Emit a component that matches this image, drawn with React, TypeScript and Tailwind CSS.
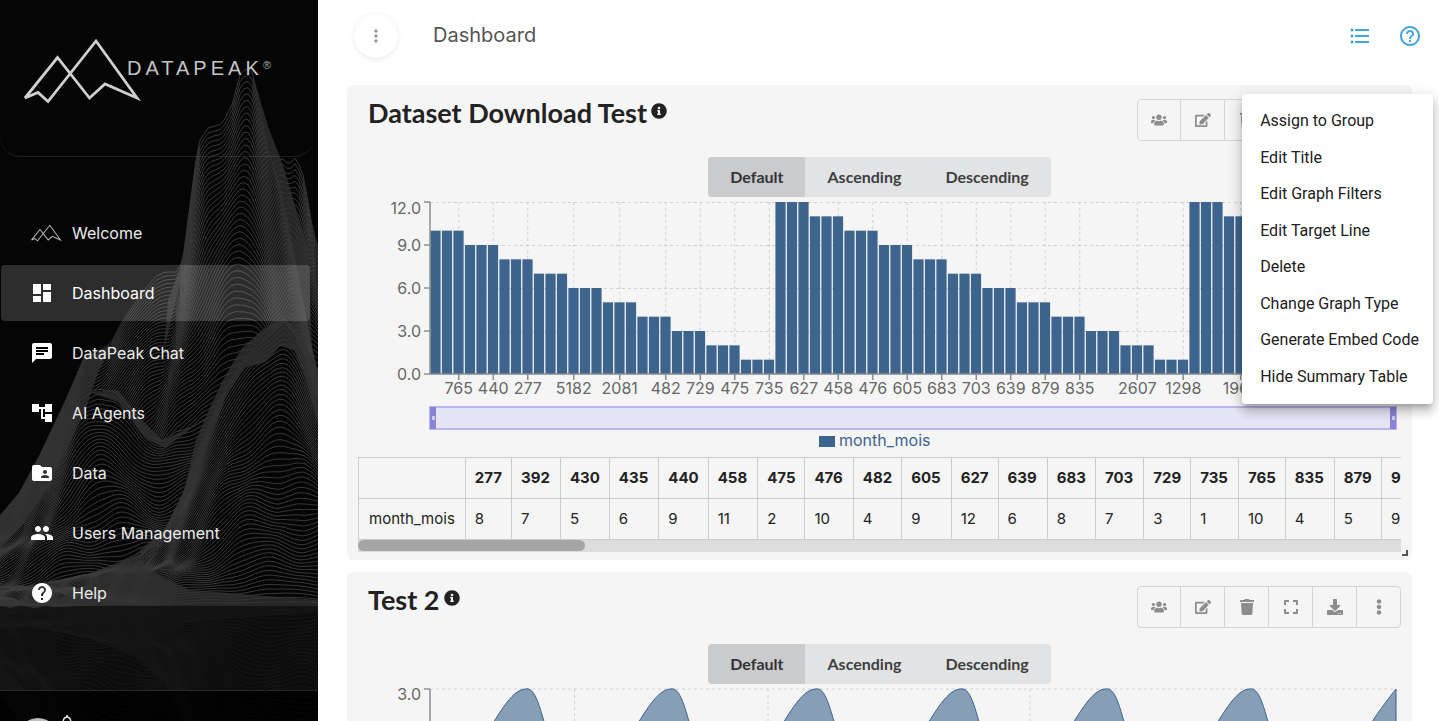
import type { ReactNode } from "react";
import type { IconType } from "react-icons";
import {
  FaDownload,
  FaEdit,
  FaEllipsisV,
  FaExpand,
  FaInfoCircle,
  FaTrash,
  FaUsers,
} from "react-icons/fa";
import {
  MdAccountTree,
  MdChat,
  MdDashboard,
  MdFolderShared,
  MdFormatListBulleted,
  MdHelp,
  MdHelpOutline,
  MdMoreVert,
  MdNotificationsNone,
  MdPeople,
} from "react-icons/md";

type Point = [number, number];

const PEAK_PATH =
  "M25 98 L57.5 57.5 L89.5 98 L105 84 L137 98 L96 41 L48 101.5 L38 92.5 Z";

const navItems: { label: string; icon?: IconType }[] = [
  { label: "Welcome" },
  { label: "Dashboard", icon: MdDashboard },
  { label: "DataPeak Chat", icon: MdChat },
  { label: "AI Agents", icon: MdAccountTree },
  { label: "Data", icon: MdFolderShared },
  { label: "Users Management", icon: MdPeople },
  { label: "Help", icon: MdHelp },
];

const toolbar: { label: string; icon: IconType }[] = [
  { label: "Assign to group", icon: FaUsers },
  { label: "Edit", icon: FaEdit },
  { label: "Delete", icon: FaTrash },
  { label: "Full screen", icon: FaExpand },
  { label: "Download", icon: FaDownload },
  { label: "More options", icon: FaEllipsisV },
];

const menuItems = [
  "Assign to Group",
  "Edit Title",
  "Edit Graph Filters",
  "Edit Target Line",
  "Delete",
  "Change Graph Type",
  "Generate Embed Code",
  "Hide Summary Table",
];

const summary: Point[] = [
  [277, 8],
  [392, 7],
  [430, 5],
  [435, 6],
  [440, 9],
  [458, 11],
  [475, 2],
  [476, 10],
  [482, 4],
  [605, 9],
  [627, 12],
  [639, 6],
  [683, 8],
  [703, 7],
  [729, 3],
  [735, 1],
  [765, 10],
  [835, 4],
  [879, 5],
  [914, 9],
];

// every value is shared by three neighbouring bars
const barGroups = [
  10, 9, 8, 7, 6, 5, 4, 3, 2, 1, 12, 11, 10, 9, 8, 7, 6, 5, 4, 3, 2, 1, 12, 11,
  10, 9, 8, 7,
];
const bars = barGroups.flatMap((value) => [value, value, value]);

// [bar index, label]
const xTicks: Point[] = [
  [2, 765],
  [5, 440],
  [8, 277],
  [12, 5182],
  [16, 2081],
  [20, 482],
  [23, 729],
  [26, 475],
  [29, 735],
  [32, 627],
  [35, 458],
  [38, 476],
  [41, 605],
  [44, 683],
  [47, 703],
  [50, 639],
  [53, 879],
  [56, 835],
  [61, 2607],
  [65, 1298],
  [70, 1962],
];

/* ---------- terrain behind the sidebar ---------- */

const GROUND = 606;

const secondPeak: Point[] = [
  [255, 240], [266, 175], [275, 162], [282, 158], [289, 165], [296, 157],
  [304, 178], [311, 220], [318, 252],
];
const mainPeak: Point[] = [
  [0, 516], [20, 492], [40, 455], [65, 402], [84, 358], [110, 345], [122, 322],
  [140, 296], [155, 277], [165, 272], [176, 272], [183, 262], [188, 220],
  [196, 160], [200, 140], [208, 128], [222, 124], [232, 105], [240, 75],
  [246, 68], [252, 72], [260, 110], [268, 150], [279, 185], [290, 235],
  [303, 300], [312, 350], [318, 375],
];
const lowRidge: Point[] = [
  [0, 547], [25, 522], [48, 485], [66, 435], [80, 400], [98, 389], [115, 392],
  [130, 408], [142, 428], [152, 438], [162, 442], [175, 432], [190, 428],
  [205, 420], [240, 470], [318, 480],
];
const frontRidge: Point[] = [
  [0, 592], [90, 574], [140, 555], [165, 530], [184, 492], [196, 458],
  [208, 428], [222, 395], [240, 366], [255, 348], [270, 336], [284, 322],
  [295, 335], [305, 358], [318, 402],
];

// dense areas where the contour lines run together
const bands = [
  "M0 516 L20 492 L40 455 L65 402 L84 358 L112 345 L98 372 L86 408 L66 450 L44 492 L22 526 L0 548 Z",
  "M132 557 L165 529 L184 490 L196 440 L208 412 L224 378 L242 348 L262 330 L284 317 L300 334 L318 370 L318 425 L306 378 L294 350 L280 346 L266 362 L244 368 L226 396 L210 440 L194 482 L172 524 L148 550 Z",
  "M252 72 L268 150 L290 235 L303 300 L312 350 L308 250 L284 168 L268 126 Z",
  "M181 266 L188 220 L200 140 L198 180 L190 240 L176 300 L164 350 L168 300 Z",
  "M88 392 L118 390 L140 418 L162 440 L196 425 L165 448 L145 438 L118 402 Z",
  "M60 598 L110 572 L140 560 L160 576 L190 590 L318 600 L318 606 L0 606 L0 600 Z",
];

function silhouette(points: Point[], x: number) {
  for (let i = 1; i < points.length; i++) {
    const [x0, y0] = points[i - 1];
    const [x1, y1] = points[i];
    if (x <= x1 && x1 > x0) {
      return y0 + ((y1 - y0) * Math.max(0, x - x0)) / (x1 - x0);
    }
  }
  return points[points.length - 1][1];
}

// t = 1 is the skyline, lower levels get softer towards the ground
function contour(points: Point[], t: number, seed: number) {
  let d = "";
  const from = points[0][0];
  const spread = (1 - t) * 22;
  for (let x = from; x <= 320; x += 4) {
    let sum = 0;
    for (let k = -3; k <= 3; k++) {
      sum += silhouette(points, x + k * spread);
    }
    const height = GROUND - sum / 7;
    const ripple =
      Math.sin(x / 14 + seed + t * 9) * 7 + Math.sin(x / 7 - t * 14) * 2;
    const y = GROUND - height * t + ripple * t * (1 - t) * 4;
    d += `${d ? "L" : "M"}${x} ${y.toFixed(1)}`;
  }
  return d;
}

function Ridge({
  points,
  lines,
  seed,
}: {
  points: Point[];
  lines: number;
  seed: number;
}) {
  const levels = Array.from({ length: lines }, (_, i) => 1 - i / lines);
  return (
    <g>
      <path
        d={`${contour(points, 1, seed)}L320 ${GROUND}L${points[0][0]} ${GROUND}Z`}
        fill="#050505"
        stroke="none"
      />
      {levels.map((t) => (
        <path key={t} d={contour(points, t, seed)} />
      ))}
    </g>
  );
}

function Mountains() {
  return (
    <g fill="none" stroke="#3d3d3d" strokeWidth="0.9">
      <Ridge points={secondPeak} lines={80} seed={1} />
      <Ridge points={mainPeak} lines={92} seed={0} />
      <Ridge points={lowRidge} lines={50} seed={4} />
      <Ridge points={frontRidge} lines={60} seed={3} />
      <g fill="#333" fillOpacity="0.75" stroke="none">
        {bands.map((d) => (
          <path key={d} d={d} />
        ))}
      </g>
    </g>
  );
}

function Terrain() {
  return (
    <svg
      viewBox="0 0 318 721"
      preserveAspectRatio="xMidYMid slice"
      className="absolute inset-0 size-full"
      aria-hidden="true"
    >
      <Mountains />
      <g transform="translate(0 1212) scale(1 -1)" opacity="0.3">
        <Mountains />
      </g>
      <rect x="0" y="606" width="318" height="84" fill="#1a1a1a" opacity="0.4" />
    </svg>
  );
}

/* ---------- sidebar ---------- */

function Sidebar() {
  return (
    <aside className="relative flex w-[318px] shrink-0 flex-col overflow-hidden bg-[#050505] font-['Inter',sans-serif]">
      <Terrain />
      <div className="relative mr-1 h-[157px] rounded-b-[20px] border-b border-white/10">
        <svg viewBox="0 0 314 156" className="h-[156px] w-[314px]">
          <path d={PEAK_PATH} fill="none" stroke="#cfcfcf" strokeWidth="2.8" />
          <text
            x="127"
            y="75"
            fill="#c4c4c4"
            className="font-['Liberation_Sans',sans-serif] text-[20px] tracking-[4px]"
          >
            DATAPEAK
          </text>
          <text
            x="263"
            y="69"
            fill="#a8a8a8"
            className="font-['Liberation_Sans',sans-serif] text-[11px]"
          >
            ®
          </text>
        </svg>
      </div>
      <nav className="relative mt-12 flex flex-1 flex-col gap-1">
        {navItems.map(({ label, icon: Icon }) => (
          <a
            key={label}
            href="#"
            className={
              label === "Dashboard"
                ? "mr-2 ml-px flex h-14 shrink-0 items-center rounded bg-white/16 pl-[29px] text-white"
                : "mr-2 ml-px flex h-14 shrink-0 items-center pl-[29px] text-[#ececec]"
            }
          >
            <span className="w-[42px]">
              {Icon ? (
                <Icon className="size-6 text-white" />
              ) : (
                <svg viewBox="20 36 122 70" className="h-[18px] w-8">
                  <path
                    d={PEAK_PATH}
                    fill="none"
                    stroke="#b5b5b5"
                    strokeWidth="4"
                  />
                </svg>
              )}
            </span>
            <span className="text-base">{label}</span>
          </a>
        ))}
      </nav>
      <div className="relative flex h-[31px] shrink-0 items-start overflow-hidden border-t border-white/15 bg-black/70 pt-[22px] pl-[18px]">
        <span className="mt-[5px] size-10 shrink-0 rounded-full bg-[#bdbdbd]" />
        <MdNotificationsNone className="size-[18px] shrink-0 text-[#d8d8d8]" />
      </div>
    </aside>
  );
}

/* ---------- charts, drawn in a 1043 wide box ---------- */

const LEFT = 72;
const RIGHT = 1038;
const STEP = 11.5;
const TOP = 5;
const BASE = 177;
const UNIT = (BASE - TOP) / 12;

function BarChart() {
  const center = (index: number) => LEFT + (index + 0.5) * STEP;
  return (
    <svg
      viewBox="0 0 1043 260"
      className="block w-full font-['Inter',sans-serif] text-[16px]"
      role="img"
      aria-label="month_mois bar chart"
    >
      <g stroke="#d0d0d0" strokeDasharray="3 3">
        {[12, 9, 6, 3].map((value) => (
          <line
            key={value}
            x1={LEFT}
            x2={RIGHT}
            y1={BASE - value * UNIT + 0.5}
            y2={BASE - value * UNIT + 0.5}
          />
        ))}
        {xTicks.map(([index]) => (
          <line
            key={index}
            x1={center(index)}
            x2={center(index)}
            y1={TOP}
            y2={BASE}
          />
        ))}
      </g>
      <g fill="#3d648d">
        {bars.map((value, i) => (
          <rect
            key={i}
            x={LEFT + i * STEP + 0.4}
            y={BASE - value * UNIT}
            width="10.2"
            height={value * UNIT}
          />
        ))}
      </g>
      <g stroke="#888" strokeWidth="1.4">
        <line x1={LEFT} x2={LEFT} y1={TOP} y2={BASE} />
        <line x1={LEFT} x2={RIGHT} y1={BASE} y2={BASE} />
        {[12, 9, 6, 3, 0].map((value) => (
          <line
            key={value}
            x1={LEFT - 6}
            x2={LEFT}
            y1={BASE - value * UNIT}
            y2={BASE - value * UNIT}
          />
        ))}
        {xTicks.map(([index]) => (
          <line
            key={index}
            x1={center(index)}
            x2={center(index)}
            y1={BASE}
            y2={BASE + 6}
          />
        ))}
      </g>
      <g fill="#666" textAnchor="end">
        <text x="63" y="17">12.0</text>
        <text x="63" y="54">9.0</text>
        <text x="63" y="97">6.0</text>
        <text x="63" y="140">3.0</text>
        <text x="63" y="183">0.0</text>
      </g>
      <g fill="#666" textAnchor="middle">
        {xTicks.map(([index, label]) => (
          <text key={index} x={center(index)} y="197">
            {label}
          </text>
        ))}
      </g>
      <rect
        x={LEFT}
        y="210"
        width={RIGHT - LEFT}
        height="22"
        fill="#e6e5f5"
        stroke="#b9b6ea"
        strokeWidth="2"
      />
      {[LEFT, RIGHT - 6].map((x) => (
        <g key={x}>
          <rect x={x} y="210" width="6" height="22" fill="#8884d8" />
          <rect x={x + 2} y="219" width="3" height="4" fill="#cfcdf0" />
        </g>
      ))}
      <rect x="461" y="239" width="16" height="11" fill="#3d648d" />
      <text x="481" y="249" fill="#3d648d">
        month_mois
      </text>
    </svg>
  );
}

function AreaChart() {
  const peaks = [168, 313, 458, 603, 748, 892];
  return (
    <svg
      viewBox="0 0 1043 200"
      className="block w-full font-['Inter',sans-serif] text-[16px]"
      role="img"
      aria-label="Test 2 area chart"
    >
      <g stroke="#d0d0d0" strokeDasharray="3 3">
        <line x1={LEFT} x2={RIGHT} y1="5" y2="5" />
        {[216.5, 410, 672, 1038].map((x) => (
          <line key={x} x1={x} x2={x} y1="5" y2="177" />
        ))}
      </g>
      <g fill="#3d648d" fillOpacity="0.6" stroke="#3d648d">
        {peaks.map((x) => (
          <path
            key={x}
            d={`M${x - 97} 177 L${x - 32} 37.5 C${x - 21} 20 ${x - 11} 5 ${x} 5 C${x + 8} 3 ${x + 13} 20 ${x + 18} 37.5 L${x + 48} 177`}
          />
        ))}
        <path d="M941 177 C985 80 1010 40 1038 5 V177" />
      </g>
      <g stroke="#888" strokeWidth="1.4">
        <line x1={LEFT} x2={LEFT} y1="5" y2="177" />
        <line x1={LEFT - 6} x2={LEFT} y1="5" y2="5" />
      </g>
      <text x="63" y="16" fill="#666" textAnchor="end">
        3.0
      </text>
    </svg>
  );
}

function SummaryTable() {
  return (
    <div className="overflow-hidden">
      <table className="w-max border-collapse font-['Inter',sans-serif] text-[15px] leading-6 text-[#222]">
        <thead>
          <tr className="h-[41px]">
            <td className="border border-[#ccc] px-2.5" />
            {summary.map(([key]) => (
              <th
                key={key}
                scope="col"
                className="border border-[#ccc] pr-2.5 pl-[9px] text-left font-bold even:pr-[9px]"
              >
                {key}
              </th>
            ))}
          </tr>
        </thead>
        <tbody>
          <tr className="h-[41px]">
            <th
              scope="row"
              className="border border-[#ccc] px-2.5 text-left font-normal"
            >
              month_mois
            </th>
            {summary.map(([key, value]) => (
              <td key={key} className="border border-[#ccc] px-[9px]">
                {value}
              </td>
            ))}
          </tr>
        </tbody>
      </table>
      <div className="h-3 bg-[#dcdcdc]">
        <div className="h-[11px] w-[227px] rounded-full bg-[#a5a5a5]" />
      </div>
    </div>
  );
}

/* ---------- cards ---------- */

function GraphCard({
  title,
  children,
}: {
  title: string;
  children: ReactNode;
}) {
  return (
    <section className="relative rounded-md bg-[#f5f5f5] px-[11px] pt-3.5 pb-2">
      <div className="flex items-start justify-between">
        <h2 className="flex pl-2.5 font-['Lato',sans-serif] text-[27px] leading-7 font-bold text-[#222]">
          {title}
          <FaInfoCircle className="mt-1 ml-1 size-4" />
        </h2>
        <div className="flex h-[42px] rounded border border-[#d4d4d5]">
          {toolbar.map(({ label, icon: Icon }) => (
            <button
              key={label}
              type="button"
              title={label}
              className="flex w-11 items-center justify-center border-l border-[#d4d4d5] text-[#8c8c8c] first:w-[42px] first:border-l-0"
            >
              <Icon className="size-4" />
            </button>
          ))}
        </div>
      </div>
      <div className="mt-4 flex justify-center font-['Lato',sans-serif] text-base font-bold text-[#3f3f3f]">
        <button
          type="button"
          className="h-10 rounded-l bg-[#cacbcd] px-[22px] text-[#333]"
        >
          Default
        </button>
        <button type="button" className="h-10 bg-[#e2e3e4] px-[22px]">
          Ascending
        </button>
        <button
          type="button"
          className="h-10 rounded-r bg-[#e2e3e4] px-[22px]"
        >
          Descending
        </button>
      </div>
      {children}
      <span className="absolute right-1 bottom-1 size-1.5 border-r-2 border-b-2 border-[#555]" />
    </section>
  );
}

function GraphMenu() {
  return (
    <div
      role="menu"
      className="absolute top-[94px] right-[6px] grid h-[310px] auto-rows-fr rounded bg-white py-[9px] font-['Roboto',sans-serif] text-base text-[#212121] shadow-[0_5px_5px_-3px_rgba(0,0,0,0.2),0_8px_10px_1px_rgba(0,0,0,0.14),0_3px_14px_2px_rgba(0,0,0,0.12)]"
    >
      {menuItems.map((item) => (
        <button
          key={item}
          type="button"
          role="menuitem"
          className="pr-3.5 pl-[18px] text-left whitespace-nowrap"
        >
          {item}
        </button>
      ))}
    </div>
  );
}

function App() {
  return (
    <div className="relative flex h-screen overflow-hidden bg-white">
      <Sidebar />
      <main className="min-w-0 flex-1 pr-[27px] pl-[29px]">
        <header className="flex h-[85px] items-start pt-3.5 font-['Inter',sans-serif] text-[#555]">
          <button
            type="button"
            title="Toggle sidebar"
            className="ml-[7px] flex size-11 items-center justify-center rounded-full bg-white text-[#999] shadow-[0_1px_5px_rgba(0,0,0,0.1)]"
          >
            <MdMoreVert className="size-5" />
          </button>
          <h1 className="ml-[35px] text-xl leading-[42px]">Dashboard</h1>
          <div className="-mr-2.5 ml-auto flex gap-[26px] pt-2.5 text-[#42a5e0]">
            <button type="button" title="List view">
              <MdFormatListBulleted className="size-6" />
            </button>
            <button type="button" title="Help">
              <MdHelpOutline className="size-6" />
            </button>
          </div>
        </header>
        <div className="flex flex-col gap-3">
          <GraphCard title="Dataset Download Test">
            <BarChart />
            <SummaryTable />
          </GraphCard>
          <GraphCard title="Test 2">
            <AreaChart />
          </GraphCard>
        </div>
      </main>
      <GraphMenu />
    </div>
  );
}

export default App;
